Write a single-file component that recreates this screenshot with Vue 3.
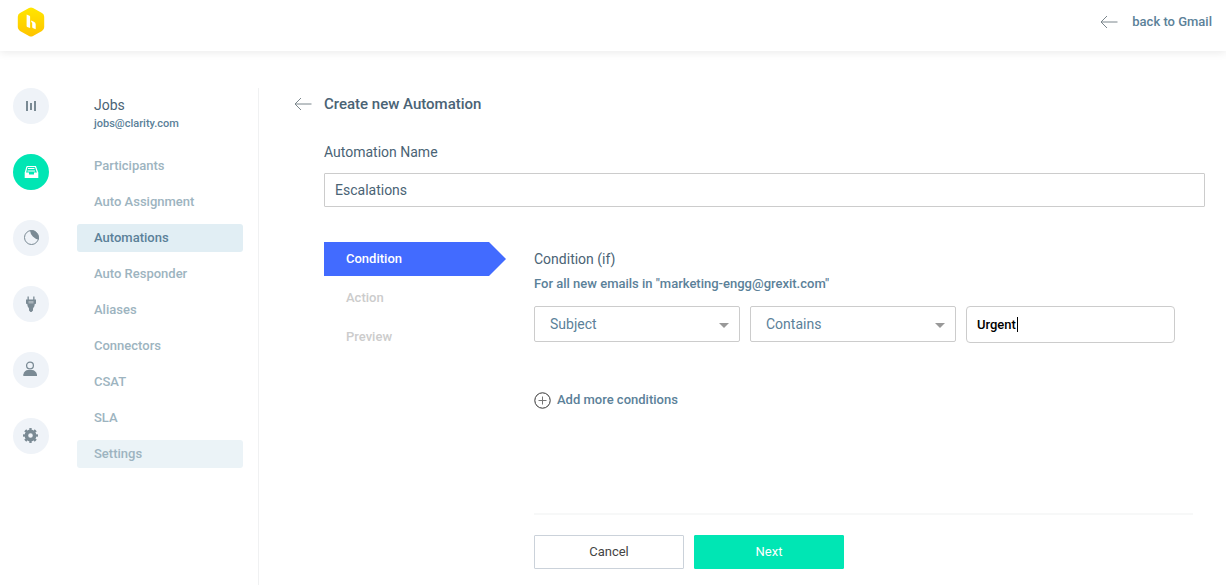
<script setup>
import { ref, computed, onMounted } from 'vue'

const railItems = [
  { id: 'analytics', label: 'Analytics' },
  { id: 'inboxes', label: 'Shared inboxes', active: true },
  { id: 'reports', label: 'Reports' },
  { id: 'integrations', label: 'Integrations' },
  { id: 'users', label: 'Users' },
  { id: 'settings', label: 'Settings' },
]

const navItems = [
  'Participants',
  'Auto Assignment',
  'Automations',
  'Auto Responder',
  'Aliases',
  'Connectors',
  'CSAT',
  'SLA',
  'Settings',
]
const current = 'Automations'
const hovered = 'Settings'

const steps = ['Condition', 'Action', 'Preview']
const activeStep = ref('Condition')

const name = ref('Escalations')
const field = ref('Subject')
const operator = ref('Contains')
const value = ref('Urgent')
const valueInput = ref(null)

// The caret follows the end of the typed value.
const measure = document.createElement('canvas').getContext('2d')
const caretLeft = computed(() => {
  measure.font = '500 13px Roboto, "Liberation Sans", sans-serif'
  return Math.ceil(measure.measureText(value.value).width) + 12
})

onMounted(() => valueInput.value.focus())
</script>

<template>
  <div class="page">
    <header class="topbar">
      <a href="#" class="logo" aria-label="Home">
        <svg width="28" height="30" viewBox="0 0 28 30">
          <defs>
            <linearGradient id="hex" x1="0" y1="0" x2="0" y2="1">
              <stop offset="0" stop-color="#ffe600" />
              <stop offset="1" stop-color="#ffc400" />
            </linearGradient>
          </defs>
          <path
            d="M12 1.1a4 4 0 0 1 4 0l9 5a4 4 0 0 1 2.2 3.6v10.600a4 4 0 0 1-2.200 3.600l-9 5a4 4 0 0 1-4 0l-9-5A4 4 0 0 1 .8 20.300V9.700A4 4 0 0 1 3 6.100z"
            fill="url(#hex)"
          />
          <path d="M9.600 7.500l2.900 1.200q.6.300.6 1V21l-2.900-1.100q-.6-.3-.6-1z" fill="#fff" />
          <path d="M14.200 13.600l2.600 1.100q1.900.8 1.900 2.600v4.900l-3-1.100q-.5-.3-.5-1v-3.900q0-.8-1-1.200z" fill="#fff" />
        </svg>
      </a>
      <a href="#" class="back">
        <svg width="18" height="14" viewBox="0 0 18 14" class="arrow">
          <path d="M17.500 7H1M7 1L1 7l6 6" />
        </svg>
        <span>back to Gmail</span>
      </a>
    </header>

    <div class="body">
      <nav class="rail" aria-label="Main">
        <a
          v-for="item in railItems"
          :key="item.id"
          href="#"
          class="rail-item"
          :class="{ active: item.active }"
          :aria-label="item.label"
        >
          <svg width="18" height="18" viewBox="0 0 18 18">
            <g v-if="item.id === 'analytics'">
              <path d="M5 4v10M9 6v7M13 4v10" stroke="#7a8a94" stroke-width="2" />
            </g>
            <g v-else-if="item.id === 'inboxes'">
              <path d="M5 3.500h8.500l2.200 6.500M5 3.500L3.300 10" fill="none" stroke="#fff" stroke-width="1.200" />
              <path d="M6 5.500h6.500M5.500 8h7.500" stroke="#fff" />
              <path d="M2.700 9.500h4.300v2h5v-2h4.300V15H2.700z" fill="#fff" />
            </g>
            <g v-else-if="item.id === 'reports'">
              <circle cx="9.500" cy="8.500" r="7" fill="none" stroke="#7a8a94" />
              <path d="M8 1.500q3-.8 5.400 1.100Q17 5 17 10.500q-4-.5-6.200-3Q8.500 5.500 8 1.500z" fill="#7a8a94" />
            </g>
            <g v-else-if="item.id === 'integrations'" fill="#7a8a94">
              <path d="M5.500 1.500h1.300v3h4.400v-3h1.300v3H14v4l-1.500 1V11L11 13.500v2L9.500 17h-1L7 15.500v-2L5.500 11V9.500L4 8.500v-4h1.500z" />
              <path d="M6.500 6h5v2.500h-5z" fill="#a8b3ba" />
            </g>
            <g v-else-if="item.id === 'users'">
              <circle cx="8" cy="4.500" r="3.400" fill="none" stroke="#7a8a94" stroke-width="1.300" />
              <path d="M1.300 15v-1.500Q2.500 9 6 9h4q3.500 0 5 4.500V15z" fill="#7a8a94" />
            </g>
            <g v-else>
              <circle cx="8.500" cy="8.500" r="4.100" fill="none" stroke="#7a8a94" stroke-width="3.600" />
              <circle
                cx="8.500"
                cy="8.500"
                r="6.200"
                fill="none"
                stroke="#7a8a94"
                stroke-width="2.600"
                pathLength="16"
                stroke-dasharray="1 1"
                stroke-dashoffset="0.500"
              />
            </g>
          </svg>
        </a>
      </nav>

      <aside class="side">
        <h2 class="side-title">Jobs</h2>
        <p class="side-mail">jobs@clarity.com</p>
        <nav class="side-nav" aria-label="Mailbox">
          <a
            v-for="item in navItems"
            :key="item"
            href="#"
            :class="{ current: item === current, hovered: item === hovered }"
          >{{ item }}</a>
        </nav>
      </aside>

      <main class="main">
        <div class="title-row">
          <a href="#" class="title-back" aria-label="Back">
            <svg width="18" height="14" viewBox="0 0 18 14" class="arrow">
              <path d="M17.500 7H1M7 1L1 7l6 6" />
            </svg>
          </a>
          <h1>Create new Automation</h1>
        </div>

        <form class="form" @submit.prevent>
          <label for="name" class="name-label">Automation Name</label>
          <input id="name" v-model="name" type="text" class="name-input" />

          <div class="wizard">
            <div class="steps">
              <button
                v-for="step in steps"
                :key="step"
                type="button"
                class="step"
                :class="{ active: step === activeStep }"
                @click="activeStep = step"
              >{{ step }}</button>
            </div>

            <section class="panel">
              <h3>Condition (if)</h3>
              <p class="scope">For all new emails in "marketing-engg@grexit.com"</p>

              <div class="condition">
                <div class="select">
                  <select v-model="field" aria-label="Field">
                    <option>Subject</option>
                    <option>From</option>
                    <option>To</option>
                  </select>
                  <svg width="10" height="5" viewBox="0 0 10 5"><path d="M0 0h10L5 5z" fill="#999" /></svg>
                </div>
                <div class="select">
                  <select v-model="operator" aria-label="Operator">
                    <option>Contains</option>
                    <option>Equals</option>
                  </select>
                  <svg width="10" height="5" viewBox="0 0 10 5"><path d="M0 0h10L5 5z" fill="#999" /></svg>
                </div>
                <div class="value">
                  <input ref="valueInput" v-model="value" type="text" aria-label="Value" />
                  <span class="caret" :style="{ left: caretLeft + 'px' }"></span>
                </div>
              </div>

              <button type="button" class="add">
                <svg width="17" height="17" viewBox="0 0 17 17" fill="none">
                  <circle cx="8.500" cy="8.500" r="7.700" stroke="#333" />
                  <path d="M4.500 8.500h8M8.500 4.500v8" stroke="#777" />
                </svg>
                <span>Add more conditions</span>
              </button>

              <div class="actions">
                <button type="button" class="btn">Cancel</button>
                <button type="submit" class="btn primary">Next</button>
              </div>
            </section>
          </div>
        </form>
      </main>
    </div>
  </div>
</template>

<style>
body {
  margin: 0;
  background: #fff;
}
</style>

<style scoped>
.page {
  display: flex;
  flex-direction: column;
  min-height: 100vh;
  font-family: Roboto, "Liberation Sans", sans-serif;
  font-size: 13px;
  font-weight: 500;
  line-height: 20px;
  color: #4a6375;
}

.page *,
.page {
  box-sizing: border-box;
}

a {
  color: inherit;
  text-decoration: none;
}

h1,
h2,
h3,
p {
  margin: 0;
}

button,
input,
select {
  margin: 0;
  font: inherit;
  outline: none;
}

.topbar {
  display: flex;
  align-items: center;
  justify-content: space-between;
  height: 51px;
  padding: 0 14px 8px 17px;
  box-shadow: 0 2px 8px rgba(0, 0, 0, 0.08);
}

.logo,
.logo svg {
  display: block;
}

.back {
  display: flex;
  align-items: center;
  gap: 14px;
  color: #5b8199;
}

.arrow {
  display: block;
  fill: none;
  stroke: #7b868c;
}

.body {
  display: flex;
  flex: 1;
  padding-top: 37px;
}

.rail {
  display: flex;
  flex-direction: column;
  gap: 30px;
  padding: 0 28px 0 13px;
}

.rail-item {
  display: grid;
  place-items: center;
  width: 36px;
  height: 36px;
  border-radius: 50%;
  background: #eff3f8;
}

.rail-item.active {
  background: #00e6b4;
}

.side {
  width: 182px;
  flex: none;
  padding: 7px 15px 0 0;
  border-right: 1px solid #f0f1f2;
}

.side-title {
  padding-left: 17px;
  font-size: 14px;
  font-weight: 400;
}

.side-mail {
  padding-left: 17px;
  font-size: 11px;
  line-height: 18px;
  color: #5b8199;
}

.side-nav {
  display: flex;
  flex-direction: column;
  gap: 8px;
  margin-top: 19px;
}

.side-nav a {
  padding: 4px 17px;
  border-radius: 3px;
  color: #9db4c0;
}

.side-nav a.current {
  background: #e1eef4;
  color: #5b8199;
}

.side-nav a.hovered {
  background: #ebf3f7;
}

.main {
  flex: 1;
  min-width: 0;
  padding: 6px 21px 16px 35px;
}

.title-row {
  display: flex;
  align-items: center;
  gap: 12px;
}

h1 {
  font-size: 15px;
  font-weight: 500;
  line-height: 20px;
}

.form {
  display: flex;
  flex-direction: column;
  padding: 28px 0 0 30px;
}

.name-label {
  font-size: 14px;
  font-weight: 400;
}

.name-input {
  height: 34px;
  margin-top: 11px;
  padding: 0 10px;
  border: 1px solid #ccc;
  border-radius: 1px;
  font-size: 14px;
  font-weight: 400;
  color: #4a6375;
}

.wizard {
  display: flex;
  gap: 28px;
  margin-top: 35px;
}

.steps {
  display: flex;
  flex-direction: column;
  gap: 5px;
  flex: none;
  width: 182px;
}

.step {
  height: 34px;
  padding: 0 22px;
  border: 0;
  background: none;
  text-align: left;
  color: #ccc;
}

.step.active {
  background: #426bff;
  color: #fff;
  clip-path: polygon(0 0, calc(100% - 17px) 0, 100% 50%, calc(100% - 17px) 100%, 0 100%);
}

.panel {
  flex: 1;
  min-width: 0;
  padding-top: 7px;
}

h3 {
  font-size: 14px;
  font-weight: 400;
}

.scope {
  margin-top: 5px;
  color: #5b8199;
}

.condition {
  display: flex;
  align-items: flex-start;
  gap: 10px;
  margin: 12px 30px 0 0;
}

.select {
  position: relative;
  flex: 1;
}

.select select {
  display: block;
  width: 100%;
  height: 36px;
  padding: 0 30px 0 15px;
  border: 1px solid #ccc;
  border-radius: 2px;
  background: #fff;
  appearance: none;
  font-size: 14px;
  font-weight: 400;
  color: #5b8199;
}

.select svg {
  position: absolute;
  top: 17px;
  right: 11px;
  pointer-events: none;
}

.value {
  position: relative;
  flex: none;
  width: 209px;
}

.value input {
  display: block;
  width: 100%;
  height: 37px;
  padding: 0 10px;
  border: 1px solid #ccc;
  border-radius: 4px;
  color: #000;
  caret-color: transparent;
}

.caret {
  position: absolute;
  top: 11px;
  width: 1px;
  height: 15px;
  background: #000;
  pointer-events: none;
}

.add {
  display: flex;
  align-items: center;
  gap: 6px;
  margin-top: 47px;
  padding: 0;
  border: 0;
  background: none;
  color: #5b8199;
}

.actions {
  display: flex;
  gap: 10px;
  margin: 103px 12px 0 0;
  padding-top: 20px;
  border-top: 2px solid #f7f8f8;
}

.btn {
  width: 150px;
  height: 34px;
  border: 1px solid #cbd2da;
  border-radius: 1px;
  background: #fff;
  font-weight: 400;
  color: #444;
}

.btn.primary {
  border-color: #00e6b4;
  background: #00e6b4;
  color: #fff;
}
</style>
